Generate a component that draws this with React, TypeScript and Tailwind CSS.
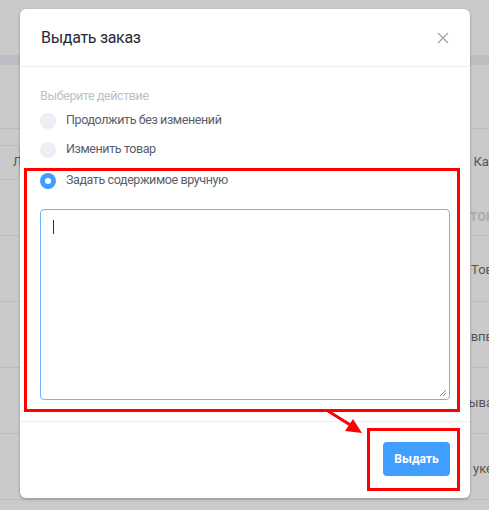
import React from "react";

const font = { fontFamily: "Roboto, 'Noto Sans', sans-serif" };

function Radio({ checked, label }: { checked?: boolean; label: string }) {
  return (
    <div className="flex items-center h-[29px]">
      {checked ? (
        <span className="w-4 h-4 rounded-full bg-[#409eff] flex items-center justify-center">
          <span className="w-[6px] h-[6px] rounded-full bg-white" />
        </span>
      ) : (
        <span className="w-4 h-4 rounded-full bg-[#edeef3]" />
      )}
      <span className="ml-[10px] text-[12.5px] tracking-[-0.4px] text-[#5a5e6b]">{label}</span>
    </div>
  );
}

export default function App() {
  return (
    <div className="relative w-[489px] h-[510px] overflow-hidden bg-[#cacaca]" style={font}>
      {/* background page */}
      <div className="flex flex-col">
        <div className="h-[55px]" />
        <div className="h-[10px] bg-[#bcbec3]" />
        <div className="h-[64px] border-b border-[#bdbdbd]" />
        <div className="h-[60px] flex items-center justify-between pt-[6px]">
          <div className="ml-[-10px] w-[30px] h-[35px] border border-[#bcbcbc] rounded flex items-center justify-end text-[13px] text-[#555]">
            <span className="mr-[-3px]">Л</span>
          </div>
          <div className="text-[13px] text-[#555] mr-[-6px]">Кат</div>
        </div>
        <div className="h-[47px] border-b border-[#bdbdbd] flex items-center justify-end pt-[10px]">
          <span className="text-[12px] font-bold text-[#aaa] mr-[-5px] tracking-wide">ТОВ</span>
        </div>
        <div className="h-[66px] border-b border-[#bdbdbd] flex items-center justify-end pt-[2px]">
          <span className="text-[13px] text-[#555] mr-[-4px]">Тов</span>
        </div>
        <div className="h-[66px] border-b border-[#bdbdbd] flex items-center justify-end pt-[4px]">
          <span className="text-[13px] text-[#555] mr-[-4px]">впв</span>
        </div>
        <div className="h-[66px] border-b border-[#bdbdbd] flex items-center justify-end pt-[4px]">
          <span className="text-[13px] text-[#555] mr-[-4px]">ыва</span>
        </div>
        <div className="h-[66px] border-b border-[#bdbdbd] flex items-center justify-end pt-[4px]">
          <span className="text-[13px] text-[#555] mr-[-4px]">уке</span>
        </div>
      </div>

      {/* modal */}
      <div className="absolute left-[20px] top-[9px] w-[450px] h-[489px] bg-white rounded-md shadow-[0_1px_3px_rgba(0,0,0,0.3)] flex flex-col">
        <div className="h-[58px] flex items-center justify-between px-[20px] border-b border-[#ebeef5]">
          <span className="text-[16px] tracking-[-0.3px] text-[#262a35] mt-[1px] ml-[1px]">Выдать заказ</span>
          <svg width="12" height="12" viewBox="0 0 12 12" className="mr-[1px]">
            <path d="M1 1L11 11M11 1L1 11" stroke="#a0a3ab" strokeWidth="1.3" />
          </svg>
        </div>
        <div className="px-[20px] pt-[21px] flex flex-col">
          <div className="text-[12.5px] tracking-[-0.4px] text-[#bcbfc9] leading-[16px] mb-[2px]">Выберите действие</div>
          <Radio label="Продолжить без изменений" />
          <Radio label="Изменить товар" />
          <div className="mt-[2px]">
            <Radio checked label="Задать содержимое вручную" />
          </div>
          <div className="mt-[14px] h-[191px] border border-[#6eb4fb] rounded relative">
            <span className="absolute left-[12px] top-[10px] w-px h-[14px] bg-[#333]" />
            <svg className="absolute right-[2px] bottom-[2px]" width="9" height="9" viewBox="0 0 9 9">
              <path d="M8 2L2 8M8 5L5 8" stroke="#666" strokeWidth="0.8" />
            </svg>
          </div>
        </div>
        <div className="mt-[21px] border-t border-[#ebeef5] flex justify-end px-[20px] pt-[20px]">
          <button className="w-[67px] h-[34px] rounded bg-[#409eff] text-white text-[12px] font-bold">Выдать</button>
        </div>
      </div>

      {/* annotations */}
      <div className="absolute left-[24px] top-[168px] w-[436px] h-[244px] border-[3px] border-[#ff0000]" />
      <div className="absolute left-[367px] top-[428px] w-[93px] h-[63px] border-[3px] border-[#ff0000]" />
      <svg className="absolute left-0 top-0" width="489" height="510" viewBox="0 0 489 510">
        <line x1="328" y1="411" x2="352" y2="426" stroke="#ff0000" strokeWidth="3" />
        <polygon points="362,433 345,431 353,419" fill="#ff0000" />
      </svg>
    </div>
  );
}
